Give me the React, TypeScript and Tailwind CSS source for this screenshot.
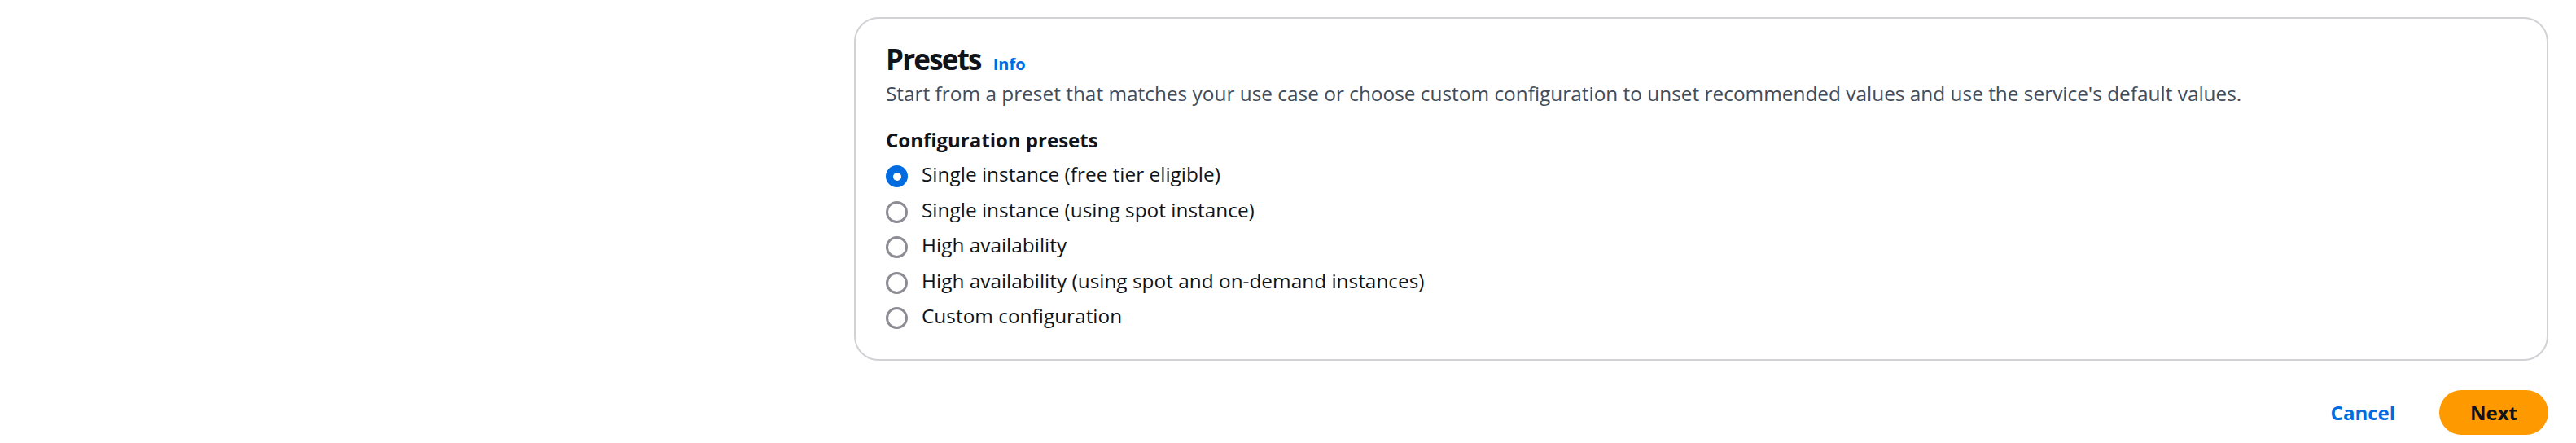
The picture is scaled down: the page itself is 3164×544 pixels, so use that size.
const OPTIONS = [
  "Single instance (free tier eligible)",
  "Single instance (using spot instance)",
  "High availability",
  "High availability (using spot and on-demand instances)",
  "Custom configuration",
];

function Radio({ checked }: { checked: boolean }) {
  return checked ? (
    <span className="mt-[6px] flex h-[27px] w-[27px] shrink-0 items-center justify-center rounded-full bg-[#006ce0]">
      <span className="h-[10px] w-[10px] rounded-full bg-white" />
    </span>
  ) : (
    <span className="mt-[6px] h-[27px] w-[27px] shrink-0 rounded-full border-[3px] border-[#8c8c94] bg-white" />
  );
}

export default function App() {
  const selected = 0;
  return (
    <div
      className="flex h-[544px] w-[3164px] bg-white text-[#0f141a]"
      style={{ fontFamily: '"Open Sans", "Noto Sans", sans-serif' }}
    >
      {/* empty nav gutter */}
      <div className="w-[1049px] shrink-0" />

      <div className="mr-[34px] flex flex-1 flex-col pt-[21px]">
        <div className="rounded-[30px] border-2 border-[#d1d1d6] pb-[36px] pl-[37px] pr-[37px] pt-[28px]">
          <div className="flex items-baseline gap-[15px]">
            <h2 className="text-[35px] leading-[44px] font-bold tracking-[-1.8px]">Presets</h2>
            <a className="text-[20px] font-bold text-[#006ce0]">Info</a>
          </div>
          <p className="mt-[3px] text-[24.4px] leading-[34px] text-[#414d5c]">
            Start from a preset that matches your use case or choose custom configuration to unset recommended
            values and use the service's default values.
          </p>

          <p className="mt-[23px] text-[24px] leading-[34px] font-bold">Configuration presets</p>
          <div className="mt-[8px] flex flex-col gap-[9.5px]">
            {OPTIONS.map((o, i) => (
              <label key={o} className="flex items-start gap-[17px]">
                <Radio checked={i === selected} />
                <span className="text-[24.4px] leading-[34px]">{o}</span>
              </label>
            ))}
          </div>
        </div>

        <div className="mt-[36px] flex items-center justify-end gap-[54px]">
          <button className="text-[24px] font-bold text-[#006ce0]">Cancel</button>
          <button className="flex h-[55px] w-[134px] items-center justify-center rounded-full bg-[#ff9900] text-[24px] font-bold text-[#0f141a]">
            Next
          </button>
        </div>
      </div>
    </div>
  );
}
